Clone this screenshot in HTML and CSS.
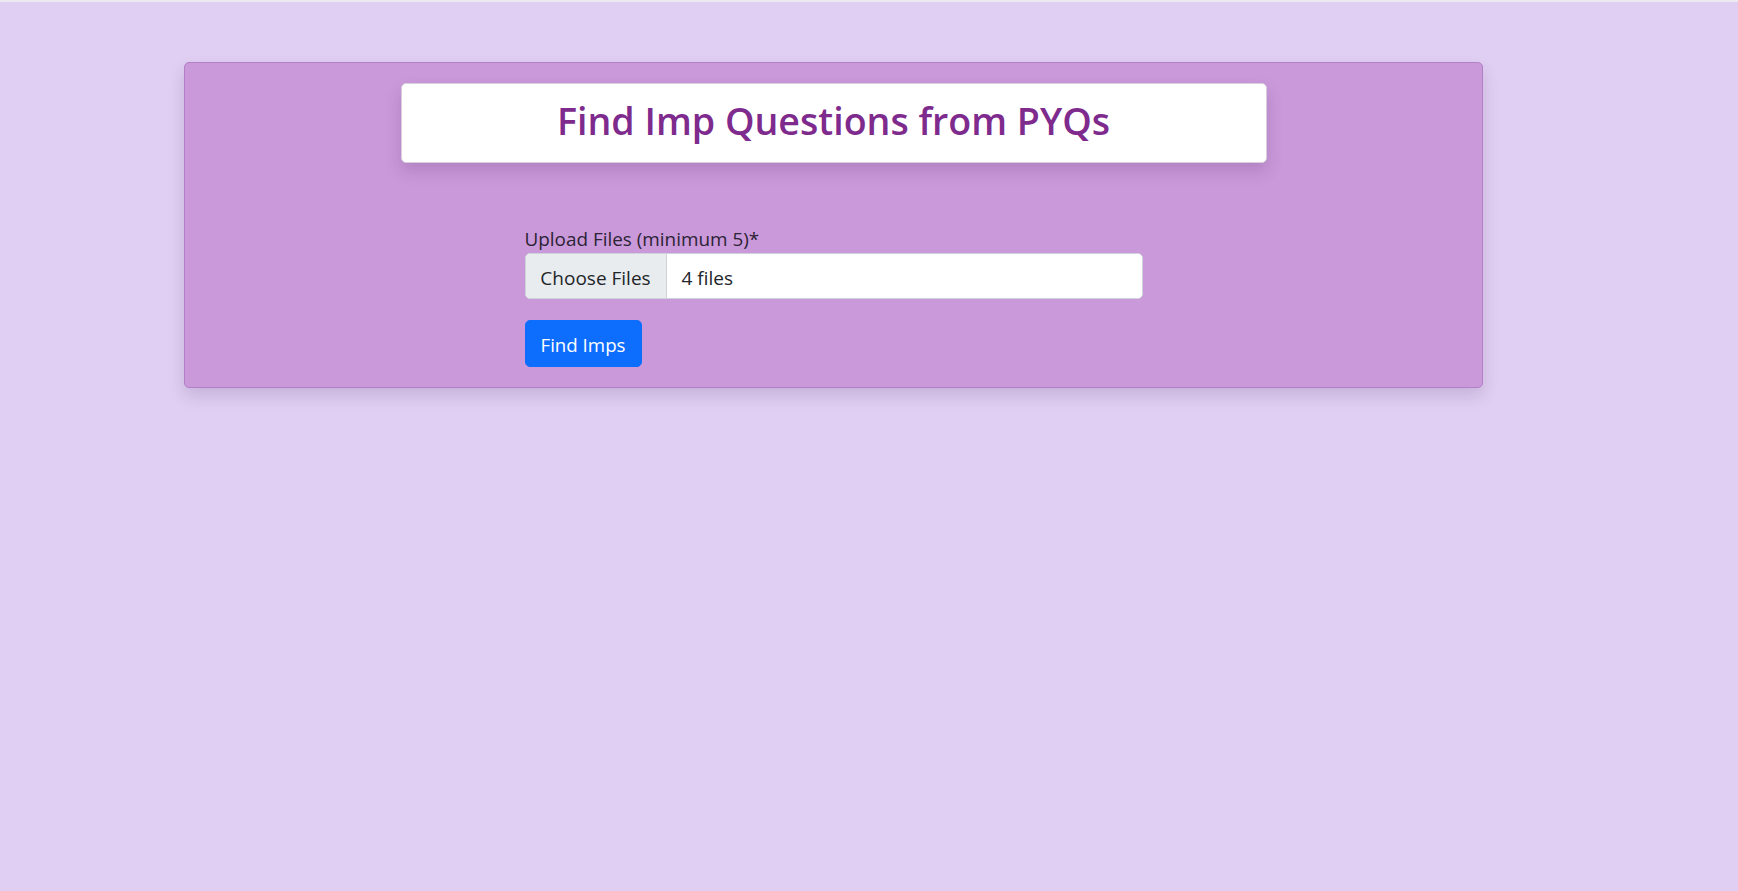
FILE: index.html
```html
<!DOCTYPE html>
<html lang="en">
<head>
<meta charset="utf-8">
<title>Find Imp Questions from PYQs</title>
<link rel="stylesheet" href="styles.css">
</head>
<body>
<div class="topline"></div>
<main class="page">
  <section class="card">
    <header class="title-box">
      <h1 class="title">Find Imp Questions from PYQs</h1>
    </header>
    <form class="upload-form">
      <label class="form-label">Upload Files (minimum 5)*</label>
      <div class="file-input">
        <span class="file-btn">Choose Files</span>
        <span class="file-name">4 files</span>
      </div>
      <button type="button" class="btn-primary">Find Imps</button>
    </form>
  </section>
</main>
</body>
</html>
```
FILE: styles.css
```css
* { box-sizing: border-box; }
html, body { margin: 0; padding: 0; }
body {
  background: #e0cff2;
  font-family: "Open Sans", "Noto Sans", sans-serif;
  color: #212529;
  min-height: 891px;
}
.topline {
  height: 2px;
  background: #ebe8f1;
}
.page {
  padding-top: 60px;
}
.card {
  margin-left: 184px;
  width: 1299px;
  background: #c999d9;
  border: 1px solid #b37fc6;
  border-radius: 5px;
  box-shadow: 0 8px 16px rgba(60, 20, 80, 0.15);
  padding: 20px 0 20px;
  display: flex;
  flex-direction: column;
  align-items: center;
}
.title-box {
  width: 866px;
  height: 80px;
  padding-bottom: 5px;
  background: #fff;
  border: 1px solid #d6d0da;
  border-radius: 5px;
  box-shadow: 0 8px 16px rgba(80, 30, 100, 0.18);
  display: flex;
  align-items: center;
  justify-content: center;
}
.title {
  margin: 0;
  font-size: 37.6px;
  font-weight: 600;
  line-height: 1.2;
  color: #7e2b8d;
}
.upload-form {
  width: 618px;
  margin-top: 64px;
  display: flex;
  flex-direction: column;
  align-items: flex-start;
}
.form-label {
  display: block;
  font-size: 18.9px;
  line-height: 24px;
  height: 24px;
  margin-bottom: 2px;
  color: #2c2335;
  white-space: nowrap;
}
.file-input {
  width: 100%;
  height: 46px;
  display: flex;
  background: #fff;
  border: 1px solid #ced4da;
  border-radius: 5px;
  overflow: hidden;
  font-size: 19px;
}
.file-btn {
  width: 141px;
  padding-top: 3px;
  display: flex;
  align-items: center;
  justify-content: center;
  background: #e9ecef;
  border-right: 1px solid #ced4da;
  color: #212529;
}
.file-name {
  display: flex;
  align-items: center;
  padding-top: 3px;
  padding-left: 15px;
  color: #212529;
}
.btn-primary {
  margin-top: 21px;
  width: 117px;
  height: 47px;
  padding: 1px 0 0;
  background: #0d6efd;
  border: 1px solid #0d6efd;
  border-radius: 5px;
  color: #fff;
  font-family: inherit;
  font-size: 18.7px;
}
```
